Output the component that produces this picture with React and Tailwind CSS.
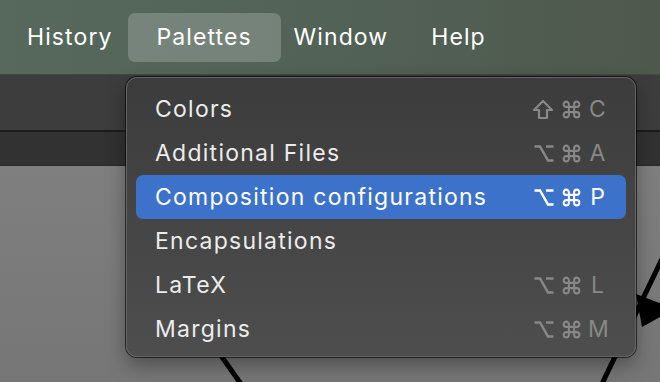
import React from "react";
import { Command } from "lucide-react";

const items = [
  { label: "Colors", mod: "shift", key: "C" },
  { label: "Additional Files", mod: "opt", key: "A" },
  { label: "Composition configurations", mod: "opt", key: "P", active: true },
  { label: "Encapsulations" },
  { label: "LaTeX", mod: "opt", key: "L" },
  { label: "Margins", mod: "opt", key: "M" },
];

function ShiftIcon() {
  return (
    <svg width="22" height="21" viewBox="0 0 22 21" fill="none" stroke="currentColor" strokeWidth="2.2" strokeLinejoin="round">
      <path d="M11 2 L20 11 H15 V19 H7 V11 H2 Z" />
    </svg>
  );
}

function OptIcon() {
  return (
    <svg width="20" height="21" viewBox="0 0 20 21" fill="none" stroke="currentColor" strokeWidth="2.5" strokeLinecap="butt">
      <path d="M0.5 3.5 H6 L14 17.5 H19.5" />
      <path d="M12 3.5 H19.5" />
    </svg>
  );
}

function Shortcut({ mod, k, active }) {
  if (!mod) return null;
  return (
    <div className={`flex items-center ${active ? "text-white" : "text-[#878887]"}`}>
      {mod === "shift" ? <ShiftIcon /> : <OptIcon />}
      <Command size={21} strokeWidth={2.3} className="ml-[7px]" />
      <span className="ml-[6px] w-[19px] text-center text-[23px] leading-none tracking-normal">{k}</span>
    </div>
  );
}

export default function App() {
  return (
    <div className="relative w-[660px] h-[382px] overflow-hidden bg-[#7a7a7a] [font-family:Inter,'Liberation_Sans',sans-serif]">
      {/* menu bar */}
      <div className="h-[75px] bg-gradient-to-r from-[#56695c] via-[#526257] to-[#4f584c] flex items-center pl-[27px] text-white text-[23px] tracking-[1.1px] border-b border-[#3f4a41]">
        <div className="h-[49px] flex items-center">History</div>
        <div className="ml-[15px] w-[153px] h-[49px] flex items-center justify-center rounded-[7px] bg-white/20">Palettes</div>
        <div className="ml-[13px] h-[49px] flex items-center">Window</div>
        <div className="ml-[43px] h-[49px] flex items-center">Help</div>
      </div>
      {/* toolbar */}
      <div className="h-[57px] bg-[#3c3d3c] border-b-[2px] border-[#1c1c1c]" />
      <div className="h-[34px] bg-[#313231] border-b border-[#2a2a2a]" />
      {/* canvas */}
      <div className="relative h-[216px] bg-gradient-to-b from-[#7f7f7f] to-[#767676]">
        <svg className="absolute inset-0" width="660" height="216" viewBox="0 168 660 216">
          <line x1="205" y1="335" x2="241" y2="386" stroke="#000" strokeWidth="5" />
          <line x1="672" y1="240" x2="600" y2="390" stroke="#000" strokeWidth="5" />
          <polygon points="636,296 662,306 662,318 642,329" fill="#000" />
        </svg>
      </div>
      {/* dropdown menu */}
      <div className="absolute left-[126px] top-[77px] w-[510px] h-[280px] rounded-[11px] border border-[#626362] shadow-[0_0_0_1px_rgba(0,0,0,0.6),0_8px_20px_rgba(0,0,0,0.35)] bg-gradient-to-b from-[#3b3c3b] to-[#4d4e4d] pt-[9px] px-[9px] text-[23px] text-[#ececec]">
        {items.map((it) => (
          <div
            key={it.label}
            className={`h-[44px] flex items-center justify-between pl-[19px] pr-[19px] rounded-[7px] ${
              it.active ? "bg-[#3d72cb] text-white" : ""
            }`}
          >
            <span className="tracking-[1.25px]">{it.label}</span>
            <Shortcut mod={it.mod} k={it.key} active={it.active} />
          </div>
        ))}
      </div>
    </div>
  );
}
